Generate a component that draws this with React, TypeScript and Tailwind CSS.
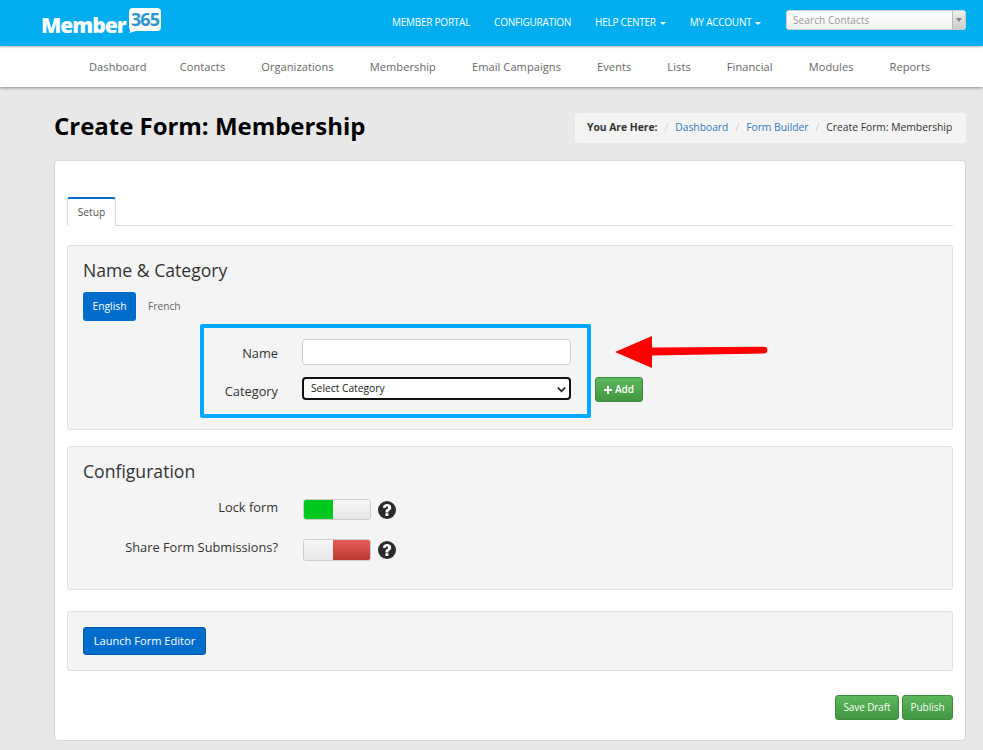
import React from "react";

const navItems = ["Contacts", "Organizations", "Membership", "Email Campaigns", "Events", "Lists", "Financial", "Modules", "Reports"];

function Caret() {
  return <span className="ml-[4px] inline-block align-middle w-0 h-0 border-x-[3px] border-x-transparent border-t-[3px] border-t-white" />;
}

function Help() {
  return (
    <svg viewBox="0 0 18 18" className="w-[18px] h-[18px] ml-[7px] shrink-0">
      <circle cx="9" cy="9" r="9" fill="#2b2b2b" />
      <path d="M4.900 6.700C5 4.200 6.800 3 9.100 3c2.500 0 4.200 1.400 4.200 3.500 0 1.500-.8 2.300-1.800 3-.9.600-1.100.9-1.100 1.600v.3H7.500v-.6c0-1.300.5-2 1.500-2.700.8-.5 1.100-.9 1.100-1.400 0-.7-.4-1.100-1.100-1.100-.8 0-1.200.5-1.300 1.300z" fill="#fff" />
      <rect x="7.400" y="12.200" width="3" height="2.800" rx=".3" fill="#fff" />
    </svg>
  );
}

function GreenButton({ children, className }: { children: React.ReactNode; className: string }) {
  return (
    <button className={"flex items-center justify-center rounded-[3px] border border-[#3d8b3d] bg-gradient-to-b from-[#5cb85c] to-[#419641] text-white text-[10px] " + className}>
      {children}
    </button>
  );
}

export default function App() {
  return (
    <div className="relative min-h-[750px] h-[750px] overflow-hidden bg-[#e8e8e8] font-['Open_Sans',sans-serif] text-[#333]">
      <header className="relative z-10 h-[46px] bg-[#00aeef] flex items-center shadow-[0_1px_2px_rgba(0,0,0,0.3)]">
        <div className="ml-[41px] mt-[1px] pb-[3px] flex items-end w-[349px] h-[34px] relative">
          <span className="text-white font-extrabold text-[21px] leading-[26px] tracking-[-1px] font-['Open_Sans',sans-serif]">Member</span>
          <div className="absolute left-[87px] top-[0px] w-[34px] h-[27px]">
            <svg viewBox="0 0 34 27" className="absolute inset-0 w-full h-full">
              <path d="M5 1h24a4 4 0 0 1 4 4v15a4 4 0 0 1-4 4H8l-7 2c2-2 1-3 0-5V5a4 4 0 0 1 4-4z" fill="#fff" />
            </svg>
            <span className="absolute left-[2px] top-[1px] w-[30px] text-center text-[#2f93d0] font-bold text-[18px] leading-[22px] tracking-[-1px]">365</span>
          </div>
        </div>
        <nav className="flex items-center h-full text-white text-[10px] tracking-[-0.25px] mt-[-1px]">
          <span className="ml-[2px]">MEMBER PORTAL</span>
          <span className="ml-[24px]">CONFIGURATION</span>
          <span className="ml-[24px]">HELP CENTER<Caret /></span>
          <span className="ml-[24px]">MY ACCOUNT<Caret /></span>
        </nav>
        <div className="absolute left-[786px] top-[10px] w-[180px] h-[20px] flex rounded-[3px] overflow-hidden border border-[#cfcfcf] bg-white">
          <div className="flex-1 pl-[6px] text-[10px] leading-[18px] text-[#999] tracking-[0.1px] bg-gradient-to-b from-white to-[#f0f0f0]">Search Contacts</div>
          <div className="w-[13px] border-l border-[#bbb] bg-gradient-to-b from-[#eee] to-[#ccc] flex items-center justify-center">
            <span className="w-0 h-0 border-x-[3px] border-x-transparent border-t-[4px] border-t-[#888]" />
          </div>
        </div>
      </header>

      <nav className="relative z-[5] h-[41px] pt-[2px] bg-white shadow-[0_1px_3px_rgba(0,0,0,0.4)] flex items-center pl-[89px] gap-[36px] text-[11px] tracking-[0.1px] text-[#666]">
        <span className="mr-[-3px]">Dashboard</span>
        {navItems.map((n) => (
          <span key={n}>{n}</span>
        ))}
      </nav>

      <div className="ml-[54px] w-[912px] flex items-center justify-between h-[73px] pt-[7px] pr-0">
        <h1 className="mt-[-2px] text-[24px] tracking-[-0.03px] font-bold leading-[32px] text-black">Create Form: Membership</h1>
        <div className="mt-[1px] h-[30px] w-[391px] rounded-[4px] bg-[#f4f4f4] flex items-center pl-[12px] text-[10.300px]">
          <span className="font-bold text-[#333]">You Are Here:</span>
          <span className="mx-[7px] text-[#ccc]">/</span>
          <span className="text-[#337ab7]">Dashboard</span>
          <span className="mx-[7px] text-[#ccc]">/</span>
          <span className="text-[#337ab7]">Form Builder</span>
          <span className="mx-[7px] text-[#ccc]">/</span>
          <span className="text-[#333]">Create Form: Membership</span>
        </div>
      </div>

      <main className="ml-[54px] w-[912px] h-[581px] bg-white border border-[#d9d9d9] rounded-[4px] pt-[36px] px-[12px]">
        <div className="h-[29px] border-b border-[#ddd] flex">
          <div className="h-[29px] w-[49px] bg-white border-x border-[#ddd] border-t-2 border-t-[#006dcc] rounded-t-[3px] text-[10.200px] text-[#555] flex items-center justify-center">Setup</div>
        </div>

        <section className="mt-[19px] h-[185px] bg-[#f4f4f4] border border-[#e0e0e0] rounded-[3px] pl-[15px] pt-[11px]">
          <h2 className="text-[17.600px] leading-[26px] text-[#333]">Name &amp; Category</h2>
          <div className="mt-[9px] flex items-center">
            <span className="w-[53px] h-[29px] rounded-[3px] bg-[#006dcc] text-white text-[10.300px] flex items-center justify-center">English</span>
            <span className="ml-[12px] text-[10.200px] text-[#666]">French</span>
          </div>
          <div className="flex items-start mt-[3px]">
            <div className="ml-[117px] w-[391px] h-[94px] border-[4px] border-[#00a8ff] rounded-[2px] pt-[11px]">
              <div className="flex items-center h-[26px]">
                <label className="w-[74px] pt-[3px] text-right text-[12.800px] text-[#333]">Name</label>
                <input className="ml-[24px] w-[269px] h-[26px] bg-white border border-[#ccc] rounded-[4px]" />
              </div>
              <div className="flex items-center h-[23px] mt-[12px]">
                <label className="w-[74px] text-right text-[12.800px] text-[#333] pt-[7px]">Category</label>
                <div className="ml-[24px] w-[269px] h-[23px] pt-[1px] bg-white border-2 border-[#111] rounded-[4px] flex items-center justify-between pl-[7px] pr-[3px] text-[10.250px] text-[#222]">
                  <span>Select Category</span>
                  <svg viewBox="0 0 10 7" className="w-[9px] h-[7px]">
                    <path d="M1 1.500l4 4 4-4" fill="none" stroke="#222" strokeWidth="2" />
                  </svg>
                </div>
              </div>
            </div>
            <GreenButton className="ml-[4px] mt-[53px] w-[48px] h-[25px] font-semibold">
              <svg viewBox="0 0 8 8" className="w-[8px] h-[8px] mr-[3px]">
                <path d="M3 0h2v3h3v2H5v3H3V5H0V3h3z" fill="#fff" />
              </svg>
              Add
            </GreenButton>
          </div>
        </section>

        <section className="mt-[16px] h-[144px] bg-[#f4f4f4] border border-[#e0e0e0] rounded-[3px] pt-[11px]">
          <h2 className="ml-[15px] text-[17.600px] leading-[26px] text-[#333]">Configuration</h2>
          <div className="mt-[15px] flex items-center h-[21px]">
            <label className="w-[210px] mt-[-4px] text-right text-[12.800px] text-[#333]">Lock form</label>
            <div className="ml-[25px] w-[68px] h-[21px] rounded-[3px] border border-[#ccc] flex overflow-hidden">
              <span className="w-[29px] bg-[#00c81e]" />
              <span className="flex-1 bg-gradient-to-b from-[#f7f7f7] to-[#e6e6e6]" />
            </div>
            <Help />
          </div>
          <div className="mt-[19px] flex items-center h-[22px]">
            <label className="w-[210px] mt-[-4px] text-right text-[12.800px] text-[#333]">Share Form Submissions?</label>
            <div className="ml-[25px] w-[68px] h-[22px] rounded-[3px] border border-[#ccc] flex overflow-hidden">
              <span className="w-[29px] bg-gradient-to-b from-[#f7f7f7] to-[#e6e6e6]" />
              <span className="flex-1 bg-gradient-to-b from-[#e85c58] to-[#b93a32]" />
            </div>
            <Help />
          </div>
        </section>

        <section className="mt-[21px] h-[60px] bg-[#f4f4f4] border border-[#e0e0e0] rounded-[3px] pl-[15px] pt-[15px]">
          <button className="w-[123px] h-[28px] rounded-[3px] bg-[#006dcc] border border-[#0058a8] text-white text-[11.100px] flex items-center justify-center">Launch Form Editor</button>
        </section>

        <div className="mt-[24px] flex justify-end gap-[3px]">
          <GreenButton className="w-[64px] h-[25px] tracking-[-0.1px]">Save Draft</GreenButton>
          <GreenButton className="w-[51px] h-[25px]">Publish</GreenButton>
        </div>
      </main>

      <svg viewBox="0 0 155 34" className="absolute left-[614px] top-[335px] w-[155px] h-[34px]">
        <path d="M1 17L38 1v11.500l112-.8a3.200 3.200 0 0 1 0 6.800L38 20.500V33z" fill="#ff0000" />
      </svg>
    </div>
  );
}
